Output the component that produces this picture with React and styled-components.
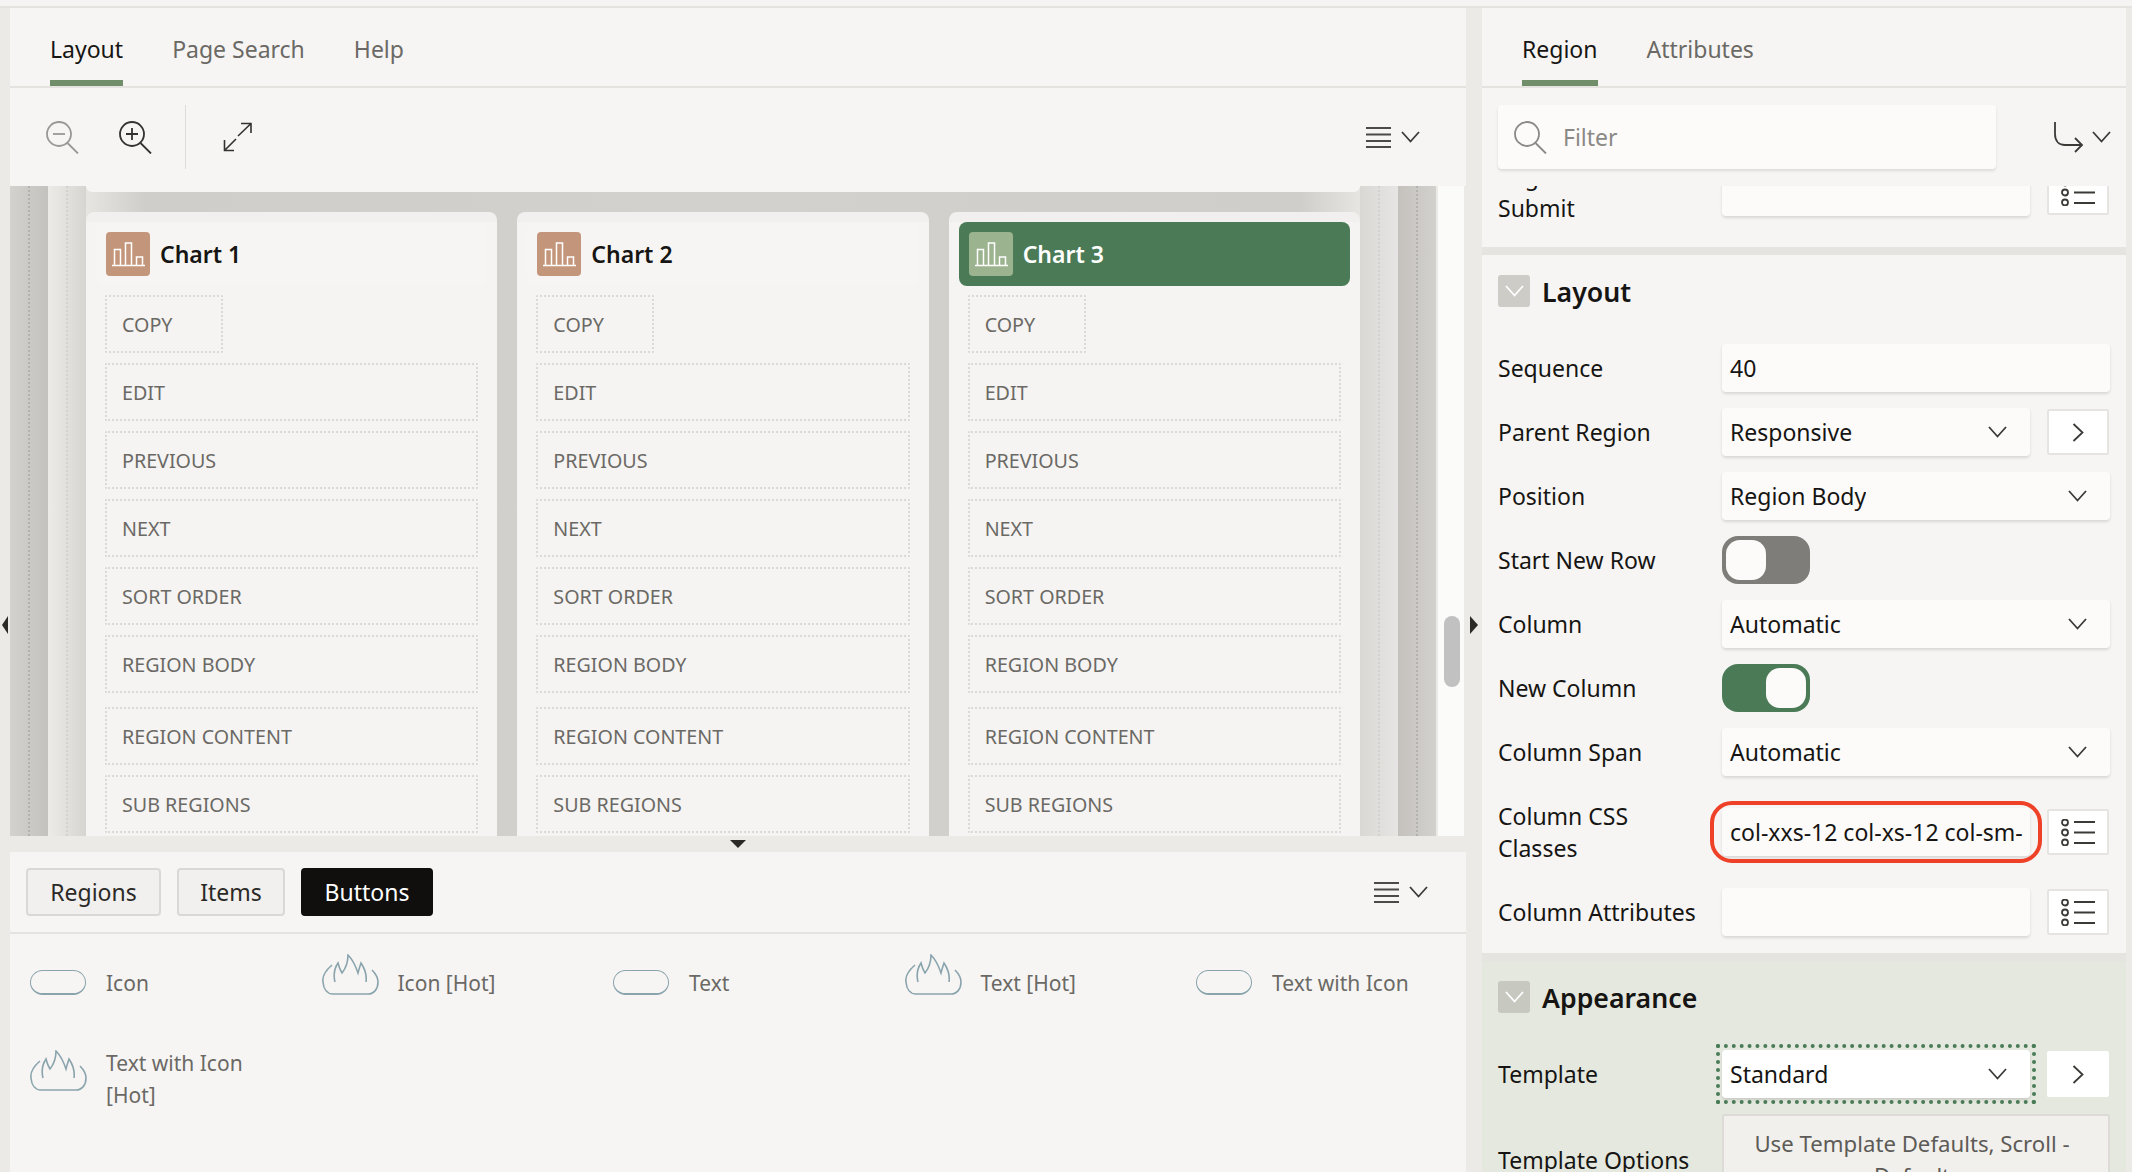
import React from 'react';
import styled, { createGlobalStyle } from 'styled-components';

const GlobalStyle = createGlobalStyle`
    html, body {
        margin: 0;
        padding: 0;
        background: #ebeae7;
    }
    body {
        font-family: "Noto Sans", "Open Sans", sans-serif;
        color: #161513;
    }
    * {
        box-sizing: border-box;
    }
`;

const Page = styled.div`
    width: 2132px;
    height: 1172px;
    overflow: hidden;
    display: flex;
    flex-direction: column;
`;

const TopStrip = styled.div`
    height: 8px;
    flex: none;
    background: #f5f4f2;
    border-bottom: 2px solid #e4e3e0;
`;

const Workspace = styled.div`
    flex: 1;
    min-height: 0;
    display: flex;
`;

const Gutter = styled.div`
    flex: none;
    width: ${(p) => p.$width}px;
    background: #ebeae7;
    padding-top: 608px;
    display: flex;
    justify-content: center;
`;

const Arrow = styled.div`
    width: 0;
    height: 0;
    border-top: 9px solid transparent;
    border-bottom: 9px solid transparent;
    ${(p) => (p.$left ? 'border-right: 6px solid #2b2a27;' : 'border-left: 8px solid #2b2a27;')}
`;

const LeftPane = styled.div`
    flex: none;
    width: 1456px;
    display: flex;
    flex-direction: column;
`;

const RightPane = styled.div`
    flex: none;
    width: 644px;
    display: flex;
    flex-direction: column;
    background: #f6f5f3;
`;

const TabBar = styled.div`
    flex: none;
    height: 80px;
    padding-left: 40px;
    display: flex;
    gap: 49px;
    background: #f6f5f3;
    border-bottom: 2px solid #e4e3e0;
`;

const Tab = styled.div`
    height: 78px;
    padding-top: 23px;
    font-size: 23px;
    line-height: 36px;
    color: ${(p) => (p.$active ? '#161513' : '#6b6965')};
    border-bottom: 6px solid ${(p) => (p.$active ? '#6f8e69' : 'transparent')};
`;

const Toolbar = styled.div`
    flex: none;
    height: 98px;
    padding: 0 46px 0 36px;
    display: flex;
    align-items: center;
    background: #f6f5f3;
`;

const FilterBar = styled(Toolbar)`
    padding: 0 15px 0 16px;
`;

const ToolGroup = styled.div`
    display: flex;
    align-items: center;
    gap: ${(p) => p.$gap || 0}px;
`;

const ToolDivider = styled.div`
    width: 1px;
    height: 64px;
    margin: 0 37px 0 32px;
    background: #dcdbd8;
`;

const MenuButton = styled.div`
    margin-left: auto;
    display: flex;
    align-items: center;
    gap: ${(p) => p.$gap || 10}px;
`;

const Canvas = styled.div`
    flex: none;
    height: 650px;
    display: flex;
    overflow: hidden;
`;

const Band = styled.div`
    flex: none;
    width: 38px;
    background: ${(p) => p.$fill};
    display: flex;
    justify-content: center;
    &::before {
        content: '';
        border-left: 2px dotted ${(p) => (p.$dark ? '#b5b2ad' : '#d3d1cd')};
    }
`;

const CanvasMain = styled.div`
    flex: none;
    width: 1274px;
    background: linear-gradient(to right, #e6e5e2 0, #cfcecb 60px, #d2d1ce 50%, #cfcecb calc(100% - 60px), #e6e5e2 100%);
`;

const CardStub = styled.div`
    height: 6px;
    margin-bottom: 20px;
    background: #f6f5f3;
    border-radius: 0 0 8px 8px;
`;

const CardGrid = styled.div`
    display: grid;
    grid-template-columns: repeat(3, 1fr);
    gap: 20px;
`;

const Card = styled.div`
    padding: 10px;
    background: linear-gradient(#f1f0ee 10px, #f5f4f2 10px);
    border-radius: 8px 8px 0 0;
    height: 640px;
    overflow: hidden;
`;

const CardHeader = styled.div`
    height: 64px;
    padding: 10px;
    display: flex;
    align-items: center;
    gap: 10px;
    border-radius: 8px;
    background: ${(p) => (p.$selected ? '#4a7b56' : '#f6f5f3')};
    color: ${(p) => (p.$selected ? '#fff' : '#161513')};
`;

const CardIcon = styled.div`
    flex: none;
    width: 44px;
    height: 44px;
    border-radius: 4px;
    background: ${(p) => (p.$selected ? '#9bb38e' : '#c3967b')};
    display: flex;
`;

const CardTitle = styled.div`
    font-size: 23px;
    font-weight: 600;
`;

const DropList = styled.div`
    padding: 9px 9px 0;
    display: flex;
    flex-direction: column;
    align-items: flex-start;
`;

const DropZone = styled.div`
    width: ${(p) => (p.$small ? '118px' : '100%')};
    height: 58px;
    flex: none;
    margin-bottom: ${(p) => (p.$spaced ? 14 : 10)}px;
    padding-left: 15px;
    display: flex;
    align-items: center;
    border: 2px dotted #dad9d5;
    border-radius: 2px;
    font-size: 19.7px;
    color: #6b6965;
`;

const ScrollTrack = styled.div`
    flex: none;
    width: 26px;
    margin-left: 2px;
    padding: 430px 0 0 6px;
    background: #fbfbfa;
`;

const ScrollThumb = styled.div`
    width: 16px;
    height: 71px;
    border-radius: 8px;
    background: #c1c1c1;
`;

const Splitter = styled.div`
    flex: none;
    height: 16px;
    padding-top: 4px;
    padding-left: 720px;
    background: #ebeae7;
`;

const DownArrow = styled.div`
    width: 0;
    height: 0;
    border-left: 8px solid transparent;
    border-right: 8px solid transparent;
    border-top: 8px solid #2b2a27;
`;

const Gallery = styled.div`
    flex: 1;
    min-height: 0;
    background: #f6f5f3;
    overflow: hidden;
`;

const GalleryBar = styled.div`
    height: 82px;
    padding: 16px 38px 0 16px;
    display: flex;
    align-items: flex-start;
    gap: 16px;
    border-bottom: 2px solid #e4e3e0;
`;

const FilterButton = styled.div`
    width: ${(p) => p.$width}px;
    height: 48px;
    display: flex;
    align-items: center;
    justify-content: center;
    font-size: 23px;
    border-radius: 4px;
    border: 2px solid ${(p) => (p.$active ? '#100f0d' : '#d9d8d5')};
    background: ${(p) => (p.$active ? '#100f0d' : '#f1f0ee')};
    color: ${(p) => (p.$active ? '#fff' : '#2b2a27')};
`;

const GalleryMenu = styled(MenuButton)`
    height: 48px;
`;

const ItemGrid = styled.div`
    padding: 20px 0 0 20px;
    display: grid;
    grid-template-columns: repeat(5, 291.5px);
    row-gap: 48px;
`;

const Item = styled.div`
    display: flex;
    align-items: flex-start;
    gap: 19px;
`;

const ItemIcon = styled.div`
    flex: none;
    width: 57px;
    height: 41px;
    margin-top: ${(p) => (p.$wrapped ? 3 : 0)}px;
    display: flex;
    align-items: flex-end;
`;

const Pill = styled.div`
    width: 56px;
    height: 25px;
    border: 1.5px solid #8aa4ad;
    border-bottom-width: 2px;
    border-radius: 13px;
`;

const ItemLabel = styled.div`
    margin-top: ${(p) => (p.$wrapped ? 0 : 13)}px;
    max-width: 170px;
    font-size: 21px;
    line-height: 32px;
    color: #6b6965;
`;

const SearchBox = styled.div`
    width: 498px;
    height: 64px;
    padding-left: 16px;
    display: flex;
    align-items: center;
    gap: 15px;
    border-radius: 4px;
    background: #fcfbfa;
    box-shadow: 0 2px 3px rgba(0, 0, 0, 0.1);
    font-size: 23px;
    color: #8b8985;
`;

const PanelScroll = styled.div`
    flex: 1;
    min-height: 0;
    overflow: hidden;
`;

const ScrollContent = styled.div`
    margin-top: -34px;
`;

const Section = styled.div`
    padding: ${(p) => (p.$head ? '20px' : '0')} 16px ${(p) => (p.$head ? 17 : 15)}px;
    border-bottom: 8px solid #e5e4e1;
    background: ${(p) => (p.$current ? '#e5e8df' : '#f6f5f3')};
    ${(p) => p.$current && 'border-bottom: 0;'}
`;

const SectionHead = styled.div`
    height: 32px;
    margin-bottom: 37px;
    display: flex;
    align-items: center;
    gap: 12px;
    font-size: 26.7px;
    font-weight: 600;
`;

const Collapse = styled.div`
    width: 32px;
    height: 32px;
    border-radius: 3px;
    background: ${(p) => (p.$current ? '#c7c9c1' : '#cdccc7')};
    display: flex;
    align-items: center;
    justify-content: center;
`;

const Rows = styled.div`
    display: flex;
    flex-direction: column;
    gap: 16px;
`;

const Row = styled.div`
    min-height: ${(p) => (p.$tall ? 80 : 48)}px;
    display: flex;
    align-items: center;
`;

const RowLabel = styled.div`
    flex: none;
    width: 224px;
    padding-right: 18px;
    font-size: 23px;
    line-height: 32px;
`;

const Field = styled.div`
    position: relative;
    flex: ${(p) => (p.$short ? '0 0 308px' : '1')};
    min-width: 0;
    height: 48px;
    padding: 0 23px 1px 8px;
    display: flex;
    align-items: center;
    justify-content: space-between;
    gap: 8px;
    border-radius: 4px;
    background: ${(p) => (p.$focus ? '#fff' : '#fcfbfa')};
    box-shadow: 0 2px 3px rgba(0, 0, 0, 0.12);
    font-size: 23px;
    ${(p) => p.$marked && `
        padding-right: 7px;
        &::after {
            content: '';
            position: absolute;
            inset: -7px -12px;
            border: 4px solid #ee4128;
            border-radius: 22px;
        }
    `}
    ${(p) => p.$focus && `
        &::after {
            content: '';
            position: absolute;
            inset: -6px;
            border: 4px dotted #4a7b56;
        }
    `}
`;

const FieldText = styled.span`
    white-space: nowrap;
    overflow: hidden;
`;

const SideButton = styled.div`
    flex: none;
    width: 62px;
    height: 46px;
    margin-left: 17px;
    display: flex;
    align-items: center;
    justify-content: center;
    background: #fff;
    border: ${(p) => (p.$plain ? '0' : '2px solid #e5e4e1')};
    border-radius: 2px;
`;

const Toggle = styled.div`
    width: 88px;
    height: 48px;
    padding: 4px;
    display: flex;
    justify-content: ${(p) => (p.$on ? 'flex-end' : 'flex-start')};
    border-radius: 16px;
    background: ${(p) => (p.$on ? '#4a7b56' : '#7f7d79')};
`;

const Knob = styled.div`
    width: 40px;
    height: 40px;
    border-radius: 14px;
    background: #fcfbfa;
`;

const OptionsButton = styled.div`
    flex: 1;
    padding: 12px 24px 12px 16px;
    text-align: center;
    font-size: 22.2px;
    line-height: 32px;
    color: #5d5b57;
    background: #f1f0ec;
    border: 2px solid #dcdbd7;
    border-radius: 2px;
`;

const Chevron = ({ color = '#3b3a37', width = 19, height = 10 }) => (
    <svg width={width} height={height + 2} viewBox="0 0 19 12" fill="none" stroke={color} strokeWidth="1.8">
        <path d="M1 1l8.5 9.5L18 1" />
    </svg>
);

const ChevronRight = () => (
    <svg width="12" height="19" viewBox="0 0 12 19" fill="none" stroke="#3b3a37" strokeWidth="1.8">
        <path d="M1.5 1l9 8.5-9 8.5" />
    </svg>
);

const Hamburger = () => (
    <svg width="25" height="21" viewBox="0 0 25 21" stroke="#4b4a47" strokeWidth="2">
        <path d="M0 1h25M0 7.5h25M0 14h25M0 20h25" />
    </svg>
);

const Magnifier = ({ color, mark }) => (
    <svg width="34" height="33" viewBox="0 0 34 33" fill="none" stroke={color} strokeWidth="1.8">
        <circle cx="13" cy="13" r="12" />
        <path d="M21.5 22L32 32.5" />
        {mark === 'minus' && <path d="M7 13h12" />}
        {mark === 'plus' && <path d="M7 13h12M13 7v12" />}
    </svg>
);

const ExpandIcon = () => (
    <svg width="30" height="30" viewBox="0 0 30 30" fill="none" stroke="#33322f" strokeWidth="1.6">
        <path d="M15 14L28 1.5M18 1.5h10V11M13 17L1.5 28.5M1.5 18v10.5H11" />
    </svg>
);

const CornerArrow = () => (
    <svg width="30" height="31" viewBox="0 0 30 31" fill="none" stroke="#3b3a37" strokeWidth="1.8">
        <path d="M1 0v12c0 7 4 11 10 11h17M21 16l7 7-7 7" />
    </svg>
);

const ListIcon = () => (
    <svg width="34" height="27" viewBox="0 0 34 27" fill="none" stroke="#3b3a37" strokeWidth="1.8">
        <circle cx="4" cy="3.5" r="3" />
        <circle cx="4" cy="13.5" r="3" />
        <circle cx="4" cy="23.5" r="3" />
        <path d="M13 3h21M13 13.5h21M13 24h21" />
    </svg>
);

const BarsIcon = () => (
    <svg width="44" height="44" viewBox="0 0 44 44" fill="none" stroke="#fff" strokeWidth="1.5">
        <path d="M6 33.5h33M8.5 33V17.5h6V33M19.5 33V11h6v22M30.5 33v-8h6v8" />
    </svg>
);

const Flame = () => (
    <svg width="57" height="41" viewBox="0 0 57 41" fill="none" stroke="#8aa4ad" strokeWidth="1.6">
        <path d="M10 11C3 17 0 22 1 28c.5 7 4 12 10 12h35c6 0 10-5 10-12 0-5-2-8-6-12" />
        <path d="M13 28c-2-8-1-13 3-19 1 4 2 7 4 10 4-5 6-12 6-18 5 5 8 12 10 18 1-4 2-7 3-10 4 6 6 12 5 19" />
    </svg>
);

const charts = ['Chart 1', 'Chart 2', 'Chart 3'];
const zones = ['EDIT', 'PREVIOUS', 'NEXT', 'SORT ORDER', 'REGION BODY', 'REGION CONTENT', 'SUB REGIONS'];
const gallery = [
    { label: 'Icon' },
    { label: 'Icon [Hot]', hot: true },
    { label: 'Text' },
    { label: 'Text [Hot]', hot: true },
    { label: 'Text with Icon' },
    { label: 'Text with Icon [Hot]', hot: true, wrapped: true },
];

const Select = ({ value, short, focus }) => (
    <Field $short={short} $focus={focus}>
        <FieldText>{value}</FieldText>
        <Chevron />
    </Field>
);

const App = () => {
    return (
        <Page>
            <GlobalStyle />
            <TopStrip />
            <Workspace>
                <Gutter $width={10}>
                    <Arrow $left />
                </Gutter>
                <LeftPane>
                    <TabBar>
                        <Tab $active>Layout</Tab>
                        <Tab>Page Search</Tab>
                        <Tab>Help</Tab>
                    </TabBar>
                    <Toolbar>
                        <ToolGroup $gap={39}>
                            <Magnifier color="#9a9895" mark="minus" />
                            <Magnifier color="#33322f" mark="plus" />
                        </ToolGroup>
                        <ToolDivider />
                        <ExpandIcon />
                        <MenuButton>
                            <Hamburger />
                            <Chevron />
                        </MenuButton>
                    </Toolbar>
                    <Canvas>
                        <Band $dark $fill="linear-gradient(to right, #d4d2ce, #c4c2be)" />
                        <Band $fill="linear-gradient(to right, #ecebe8, #d6d5d2)" />
                        <CanvasMain>
                            <CardStub />
                            <CardGrid>
                                {charts.map((title, i) => (
                                    <Card key={title}>
                                        <CardHeader $selected={i === 2}>
                                            <CardIcon $selected={i === 2}>
                                                <BarsIcon />
                                            </CardIcon>
                                            <CardTitle>{title}</CardTitle>
                                        </CardHeader>
                                        <DropList>
                                            <DropZone $small>COPY</DropZone>
                                            {zones.map((zone) => (
                                                <DropZone key={zone} $spaced={zone === 'REGION BODY'}>
                                                    {zone}
                                                </DropZone>
                                            ))}
                                        </DropList>
                                    </Card>
                                ))}
                            </CardGrid>
                        </CanvasMain>
                        <Band $fill="linear-gradient(to right, #d9d8d5, #e6e5e3)" />
                        <Band $dark $fill="linear-gradient(to right, #c5c2be, #d3d1cd)" />
                        <ScrollTrack>
                            <ScrollThumb />
                        </ScrollTrack>
                    </Canvas>
                    <Splitter>
                        <DownArrow />
                    </Splitter>
                    <Gallery>
                        <GalleryBar>
                            <FilterButton $width={135}>Regions</FilterButton>
                            <FilterButton $width={108}>Items</FilterButton>
                            <FilterButton $width={132} $active>Buttons</FilterButton>
                            <GalleryMenu>
                                <Hamburger />
                                <Chevron />
                            </GalleryMenu>
                        </GalleryBar>
                        <ItemGrid>
                            {gallery.map((item) => (
                                <Item key={item.label}>
                                    <ItemIcon $wrapped={item.wrapped}>{item.hot ? <Flame /> : <Pill />}</ItemIcon>
                                    <ItemLabel $wrapped={item.wrapped}>{item.label}</ItemLabel>
                                </Item>
                            ))}
                        </ItemGrid>
                    </Gallery>
                </LeftPane>
                <Gutter $width={16}>
                    <Arrow />
                </Gutter>
                <RightPane>
                    <TabBar>
                        <Tab $active>Region</Tab>
                        <Tab>Attributes</Tab>
                    </TabBar>
                    <FilterBar>
                        <SearchBox>
                            <Magnifier color="#8b8985" />
                            Filter
                        </SearchBox>
                        <MenuButton $gap={8}>
                            <CornerArrow />
                            <Chevron />
                        </MenuButton>
                    </FilterBar>
                    <PanelScroll>
                        <ScrollContent>
                            <Section>
                                <Row $tall>
                                    <RowLabel>Page Items to Submit</RowLabel>
                                    <Field $short />
                                    <SideButton>
                                        <ListIcon />
                                    </SideButton>
                                </Row>
                            </Section>
                            <Section $head>
                                <SectionHead>
                                    <Collapse>
                                        <Chevron color="#fff" />
                                    </Collapse>
                                    Layout
                                </SectionHead>
                                <Rows>
                                    <Row>
                                        <RowLabel>Sequence</RowLabel>
                                        <Field>40</Field>
                                    </Row>
                                    <Row>
                                        <RowLabel>Parent Region</RowLabel>
                                        <Select short value="Responsive" />
                                        <SideButton>
                                            <ChevronRight />
                                        </SideButton>
                                    </Row>
                                    <Row>
                                        <RowLabel>Position</RowLabel>
                                        <Select value="Region Body" />
                                    </Row>
                                    <Row>
                                        <RowLabel>Start New Row</RowLabel>
                                        <Toggle>
                                            <Knob />
                                        </Toggle>
                                    </Row>
                                    <Row>
                                        <RowLabel>Column</RowLabel>
                                        <Select value="Automatic" />
                                    </Row>
                                    <Row>
                                        <RowLabel>New Column</RowLabel>
                                        <Toggle $on>
                                            <Knob />
                                        </Toggle>
                                    </Row>
                                    <Row>
                                        <RowLabel>Column Span</RowLabel>
                                        <Select value="Automatic" />
                                    </Row>
                                    <Row $tall>
                                        <RowLabel>Column CSS Classes</RowLabel>
                                        <Field $short $marked>
                                            <FieldText>col-xxs-12 col-xs-12 col-sm-12 col-md-4</FieldText>
                                        </Field>
                                        <SideButton>
                                            <ListIcon />
                                        </SideButton>
                                    </Row>
                                    <Row>
                                        <RowLabel>Column Attributes</RowLabel>
                                        <Field $short />
                                        <SideButton>
                                            <ListIcon />
                                        </SideButton>
                                    </Row>
                                </Rows>
                            </Section>
                            <Section $head $current>
                                <SectionHead>
                                    <Collapse $current>
                                        <Chevron color="#fff" />
                                    </Collapse>
                                    Appearance
                                </SectionHead>
                                <Rows>
                                    <Row>
                                        <RowLabel>Template</RowLabel>
                                        <Select short focus value="Standard" />
                                        <SideButton $plain>
                                            <ChevronRight />
                                        </SideButton>
                                    </Row>
                                    <Row>
                                        <RowLabel>Template Options</RowLabel>
                                        <OptionsButton>Use Template Defaults, Scroll - Default</OptionsButton>
                                    </Row>
                                </Rows>
                            </Section>
                        </ScrollContent>
                    </PanelScroll>
                </RightPane>
                <Gutter $width={6} />
            </Workspace>
        </Page>
    );
};

export default App;
